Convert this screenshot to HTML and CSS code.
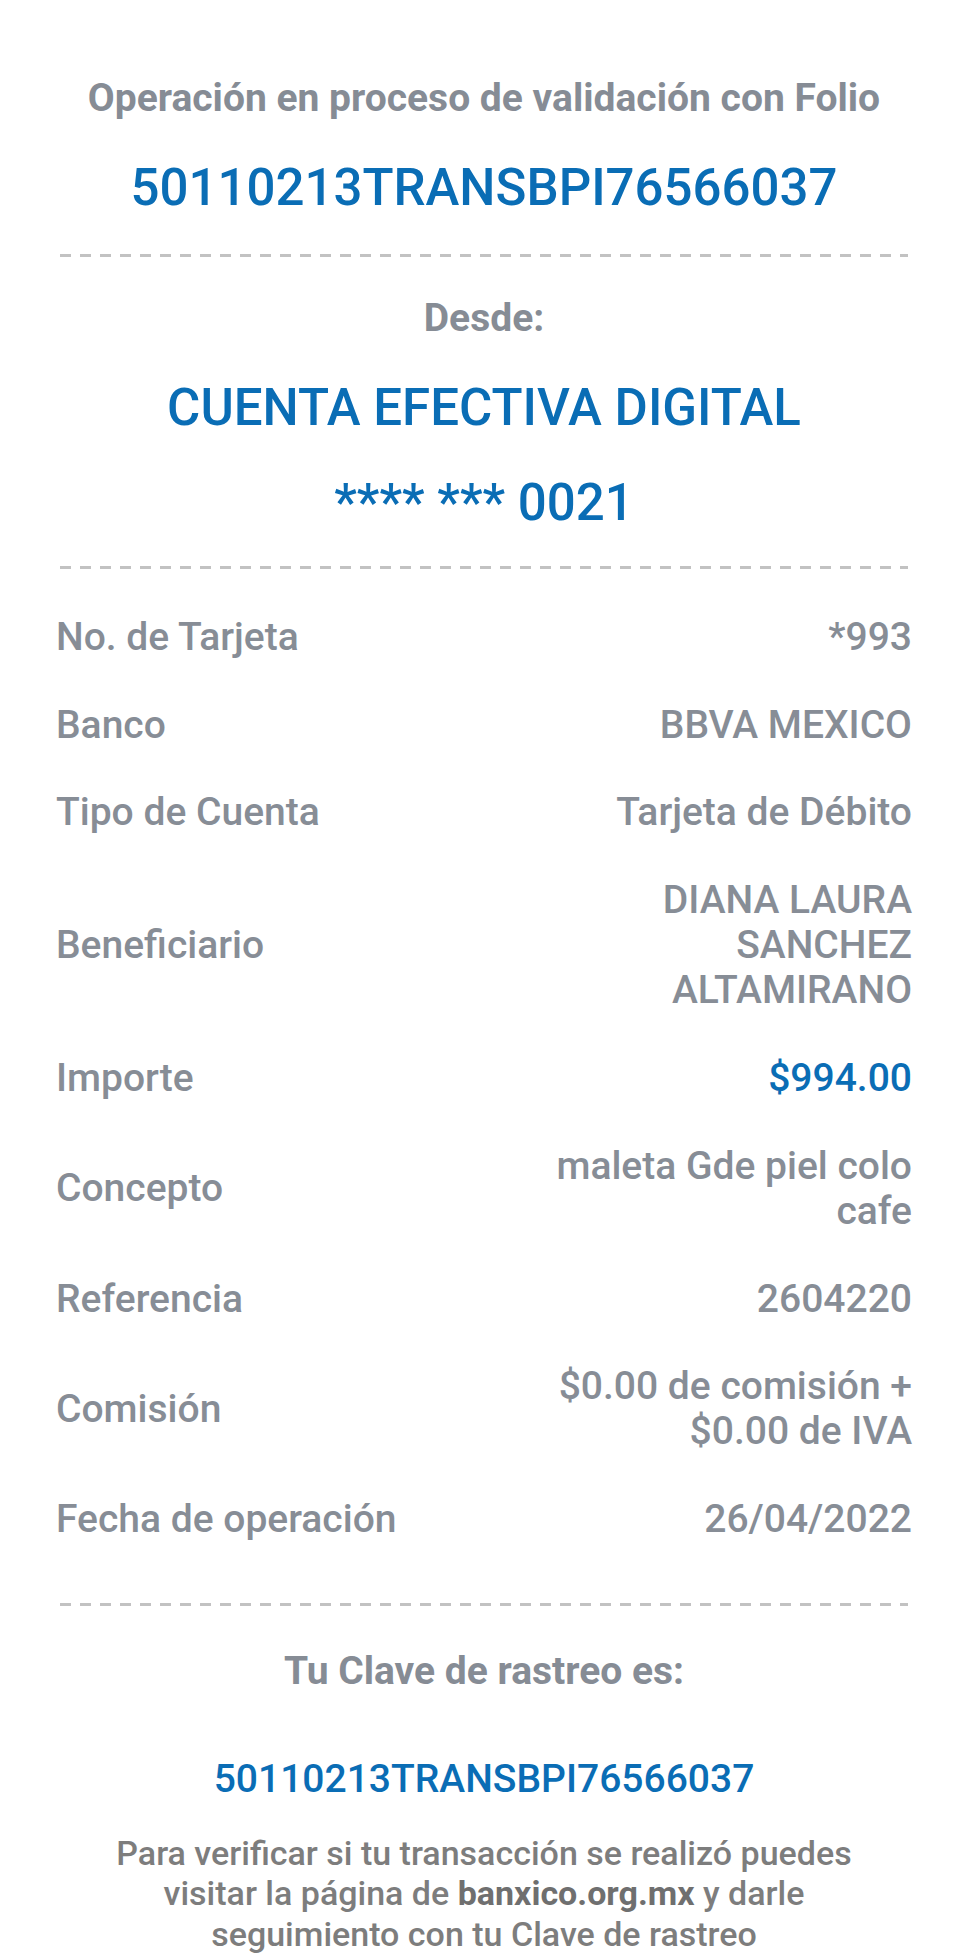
FILE: index.html
```html
<!DOCTYPE html>
<html lang="es">
<head>
<meta charset="utf-8">
<title>Comprobante</title>
<link rel="stylesheet" href="styles.css">
</head>
<body>
<main class="receipt">
  <section class="block block-top">
    <p class="heading">Operación en proceso de validación con Folio</p>
    <p class="big-blue folio">50110213TRANSBPI76566037</p>
  </section>
  <div class="dash"></div>
  <section class="block block-from">
    <p class="heading">Desde:</p>
    <p class="big-blue account">CUENTA EFECTIVA DIGITAL</p>
    <p class="big-blue account-num">**** *** 0021</p>
  </section>
  <div class="dash"></div>
  <section class="details">
    <div class="row"><span class="label">No. de Tarjeta</span><span class="value">*993</span></div>
    <div class="row"><span class="label">Banco</span><span class="value">BBVA MEXICO</span></div>
    <div class="row"><span class="label">Tipo de Cuenta</span><span class="value">Tarjeta de Débito</span></div>
    <div class="row"><span class="label">Beneficiario</span><span class="value">DIANA LAURA SANCHEZ ALTAMIRANO</span></div>
    <div class="row"><span class="label">Importe</span><span class="value value-blue">$994.00</span></div>
    <div class="row"><span class="label">Concepto</span><span class="value">maleta Gde piel colo cafe</span></div>
    <div class="row"><span class="label">Referencia</span><span class="value">2604220</span></div>
    <div class="row"><span class="label">Comisión</span><span class="value">$0.00 de comisión + $0.00 de IVA</span></div>
    <div class="row"><span class="label">Fecha de operación</span><span class="value">26/04/2022</span></div>
  </section>
  <div class="dash dash-bottom"></div>
  <section class="block block-track">
    <p class="heading">Tu Clave de rastreo es:</p>
    <p class="track-code">50110213TRANSBPI76566037</p>
    <p class="note">Para verificar si tu transacción se realizó puedes visitar la página de <strong>banxico.org.mx</strong> y darle seguimiento con tu Clave de rastreo</p>
  </section>
</main>
</body>
</html>
```

FILE: styles.css
```css
* { box-sizing: border-box; }

html, body {
  margin: 0;
  padding: 0;
  background: #ffffff;
}

body {
  font-family: Roboto, "Noto Sans", "Liberation Sans", sans-serif;
  color: #868c95;
}

p { margin: 0; }

.receipt {
  width: 968px;
  padding: 0 56px;
}

.block {
  text-align: center;
}

.heading {
  font-size: 39px;
  font-weight: 700;
  line-height: 46px;
  color: #868c95;
}

.big-blue {
  font-size: 51px;
  font-weight: 500;
  line-height: 60px;
  color: #0a6db5;
}

.block-top {
  padding-top: 75px;
  padding-bottom: 36px;
}

.block-top .folio {
  margin-top: 37px;
}

.dash {
  height: 3px;
  margin: 0 4px;
  background: repeating-linear-gradient(to right, #c2c2c2 0 11px, transparent 11px 20px);
}

.block-from {
  padding-top: 38px;
  padding-bottom: 33px;
}

.block-from .account {
  margin-top: 37px;
}

.block-from .account-num {
  margin-top: 35px;
}

.details {
  padding-top: 24.5px;
  padding-bottom: 39.5px;
}

.row {
  display: grid;
  grid-template-columns: 1fr 400px;
  align-items: center;
  padding: 21.4px 0;
  font-size: 39px;
  font-weight: 500;
  line-height: 45px;
  color: #878d96;
}

.value {
  text-align: right;
}

.value-blue {
  color: #0a6db5;
}

.block-track {
  padding-top: 41.5px;
}

.track-code {
  margin-top: 62px;
  font-size: 39px;
  font-weight: 500;
  line-height: 46px;
  color: #0a6db5;
}

.note {
  margin: 31px auto 0;
  max-width: 760px;
  font-size: 34px;
  font-weight: 500;
  line-height: 40.5px;
  color: #7d7d7d;
}

.note strong {
  font-weight: 700;
  color: #6f6f6f;
}
```
